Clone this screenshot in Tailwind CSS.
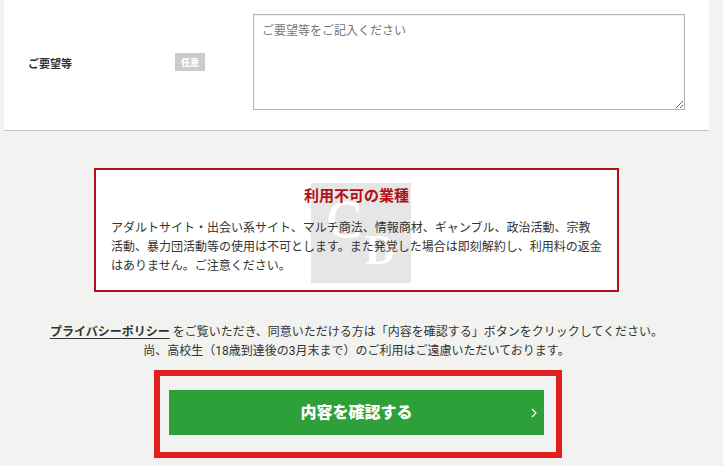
<!DOCTYPE html>
<html lang="ja">
<head>
    <meta charset="UTF-8">
    <meta name="viewport" content="width=device-width, initial-scale=1.0">
    <title>お問い合わせ</title>
    <script src="https://cdn.jsdelivr.net/npm/@tailwindcss/browser@4"></script>
</head>
<body class="bg-[#f2f2f0] text-[#333] text-[12px] leading-[19px] font-['Roboto','Noto_Sans_CJK_JP',sans-serif]">
<main class="ml-1 mr-3.5 pb-8">
    <form action="#" method="post">
        <!-- ご要望等 -->
        <div class="flex items-center bg-white border-b border-[#c4c4c4] pt-3.5 pb-5 pl-6 pr-6">
            <div class="flex items-center w-[225px] shrink-0">
                <label for="request" class="w-[147px] pt-1 text-[11px] font-bold">ご要望等</label>
                <span class="bg-[#cbcbc9] text-white text-[9px] leading-4 font-black px-1.5 pt-0.5">任意</span>
            </div>
            <textarea id="request" name="request" placeholder="ご要望等をご記入ください"
                      class="block flex-1 min-w-0 h-24 border border-[#b5b5b5] bg-white px-2 py-[7px] placeholder:text-[#757575] shadow-[inset_0_1px_1px_#eee]"></textarea>
        </div>

        <!-- 利用不可の業種 -->
        <section class="relative w-full max-w-[525px] mx-auto mt-[37px] px-[15px] pt-4 pb-3.5 border-2 border-[#b01016] bg-white">
            <svg class="absolute left-[215px] top-[13px] size-[100px]" viewBox="0 0 100 100" aria-hidden="true">
                <rect width="100" height="100" fill="#e7e6e6"/>
                <g fill="#fff" font-family="Liberation Serif, serif">
                    <text x="16" y="54" font-size="52" stroke="#fff" stroke-width="1">C</text>
                    <text x="54" y="81" font-size="42" font-weight="bold">D</text>
                </g>
            </svg>
            <h2 class="relative text-center text-[15px] leading-5 font-bold text-[#b01016]">利用不可の業種</h2>
            <p class="relative mt-[13px]">アダルトサイト・出会い系サイト、マルチ商法、情報商材、ギャンブル、政治活動、宗教活動、暴力団活動等の使用は不可とします。また発覚した場合は即刻解約し、利用料の返金はありません。ご注意ください。</p>
        </section>

        <p class="mt-[31px] text-center">
            <a href="#" class="font-bold underline underline-offset-2">プライバシーポリシー</a> をご覧いただき、同意いただける方は「内容を確認する」ボタンをクリックしてください。<br>
            尚、高校生（18歳到達後の3月末まで）のご利用はご遠慮いただいております。
        </p>

        <!-- 送信ボタン -->
        <div class="relative w-full max-w-[375px] mx-auto mt-[29px]">
            <div class="absolute -top-5 -bottom-[23px] -left-[15px] -right-[18px] border-6 border-[#e01f1f] pointer-events-none"></div>
            <button type="submit" class="relative block w-full h-[45px] bg-[#2ea03a] text-white text-[16px] font-black cursor-pointer">
                内容を確認する
                <svg class="absolute right-1.5 top-1/2 -translate-y-1/2 w-2 h-2.5" viewBox="0 0 8 10" fill="none" stroke="currentColor" stroke-width="1.2" aria-hidden="true">
                    <path d="M2 1l4 4-4 4"/>
                </svg>
            </button>
        </div>
    </form>
</main>
</body>
</html>
